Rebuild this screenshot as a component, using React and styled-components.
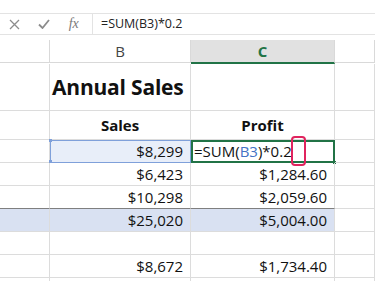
import React from "react";
import styled, { createGlobalStyle } from "styled-components";

const GlobalStyle = createGlobalStyle`
  html, body { margin: 0; padding: 0; background: #fff; }
  body { font-family: "Open Sans", "Liberation Sans", sans-serif; overflow: hidden; }
`;

const Page = styled.div`
  width: 375px;
  height: 281px;
  overflow: hidden;
  background: #fff;
`;

const FormulaBar = styled.div`
  display: flex;
  height: 20px;
  margin-top: 13px;
  border-top: 1px solid #e3e3e3;
  border-bottom: 1px solid #e3e3e3;
`;

const Tools = styled.div`
  width: 92px;
  display: flex;
  align-items: center;
  justify-content: space-around;
  padding: 0 4px 0 0;
  box-sizing: border-box;
  color: #8a8a8a;
`;

const Fx = styled.span`
  font-family: "Liberation Serif", serif;
  font-style: italic;
  font-size: 14px;
  color: #7a7a7a;
`;

const Input = styled.div`
  flex: 1;
  border-left: 1px solid #e3e3e3;
  padding-left: 8px;
  font-size: 12.5px;
  line-height: 20px;
  color: #222;
`;

const Grid = styled.div`
  margin-top: 5px;
  display: grid;
  grid-template-columns: 50px 141px 144px 1fr;
`;

const Head = styled.div`
  height: 22px;
  border-right: 1px solid #d9d9d9;
  border-bottom: ${({ $active }) => ($active ? "2px solid #217346" : "1px solid #d9d9d9")};
  background: ${({ $active }) => ($active ? "#e1e1e1" : "#fff")};
  color: ${({ $active }) => ($active ? "#217346" : "#444")};
  font-weight: ${({ $active }) => ($active ? 700 : 400)};
  font-size: 15px;
  line-height: 22px;
  text-align: center;
`;

const Cell = styled.div`
  position: relative;
  height: ${({ $h }) => $h || 22}px;
  box-sizing: content-box;
  border-right: 1px solid #dcdcdc;
  border-bottom: 1px solid #dcdcdc;
  background: ${({ $total }) => ($total ? "#d9e1f2" : "transparent")};
  border-top: ${({ $total }) => ($total ? "1px solid #7f7f7f" : "none")};
  margin-top: ${({ $total }) => ($total ? "-1px" : "0")};
  padding: 0 7px;
  display: flex;
  align-items: center;
  justify-content: ${({ $align }) => $align || "flex-end"};
  font-size: 15px;
  color: #111;
  white-space: nowrap;
`;

const Plain = styled(Cell)`
  background: transparent;
`;

const Title = styled.span`
  font-weight: 700;
  font-size: 21px;
  margin-left: -5px;
  letter-spacing: -0.2px;
`;

const ColTitle = styled.span`
  font-weight: 700;
  font-size: 15px;
`;

const Selected = styled(Cell)`
  background: #e8eef9;
  outline: 1px solid #7fa0da;
  outline-offset: -1px;
`;

const Handle = styled.span`
  position: absolute;
  width: 3px;
  height: 3px;
  background: ${({ $c }) => $c};
  left: ${({ $l }) => $l};
  right: ${({ $r }) => $r};
  top: ${({ $t }) => $t};
  bottom: ${({ $b }) => $b};
`;

const Editing = styled(Cell)`
  justify-content: flex-start;
  padding-left: 3px;
  outline: 2px solid #217346;
  outline-offset: -2px;
  font-size: 15px;
`;

const Ref = styled.span`
  color: #4472c4;
`;

const Marker = styled.span`
  position: absolute;
  left: 100px;
  top: -4px;
  width: 11px;
  height: 26px;
  border: 2px solid #e0245e;
  border-radius: 4px;
`;

const rows = [
  ["$6,423", "$1,284.60"],
  ["$10,298", "$2,059.60"],
];

const later = [
  ["$8,672", "$1,734.40"],
  ["$12,309", "$2,461.80"],
];

export default function App() {
  return (
    <Page>
      <GlobalStyle />
      <FormulaBar>
        <Tools>
          <svg width="11" height="11" viewBox="0 0 11 11">
            <path d="M1 1 L10 10 M10 1 L1 10" stroke="#8c8c8c" strokeWidth="1.3" />
          </svg>
          <svg width="12" height="10" viewBox="0 0 12 10">
            <path d="M1 5.5 L4.5 9 L11 1" stroke="#8c8c8c" strokeWidth="1.8" fill="none" />
          </svg>
          <Fx>fx</Fx>
        </Tools>
        <Input>=SUM(B3)*0.2</Input>
      </FormulaBar>

      <Grid>
        <Head />
        <Head>B</Head>
        <Head $active>C</Head>
        <Head />

        <Plain $h={46} />
        <Plain $h={46} $align="flex-start"><Title>Annual Sales</Title></Plain>
        <Plain $h={46} />
        <Plain $h={46} />

        <Plain $h={28} />
        <Plain $h={28} $align="center"><ColTitle>Sales</ColTitle></Plain>
        <Plain $h={28} $align="center"><ColTitle>Profit</ColTitle></Plain>
        <Plain $h={28} />

        <Plain />
        <Selected>
          $8,299
          <Handle $c="#7fa0da" $l="-1px" $t="-1px" />
          <Handle $c="#7fa0da" $l="-1px" $b="-1px" />
        </Selected>
        <Editing>
          =SUM(<Ref>B3</Ref>)*0.2
          <Marker />
          <Handle $c="#217346" $r="-2px" $b="-2px" />
        </Editing>
        <Plain />

        {rows.map(([s, p]) => (
          <React.Fragment key={s}>
            <Plain />
            <Plain>{s}</Plain>
            <Plain>{p}</Plain>
            <Plain />
          </React.Fragment>
        ))}

        <Cell $total />
        <Cell $total>$25,020</Cell>
        <Cell $total>$5,004.00</Cell>
        <Plain />

        <Plain />
        <Plain />
        <Plain />
        <Plain />

        {later.map(([s, p]) => (
          <React.Fragment key={s}>
            <Plain />
            <Plain>{s}</Plain>
            <Plain>{p}</Plain>
            <Plain />
          </React.Fragment>
        ))}
      </Grid>
    </Page>
  );
}
